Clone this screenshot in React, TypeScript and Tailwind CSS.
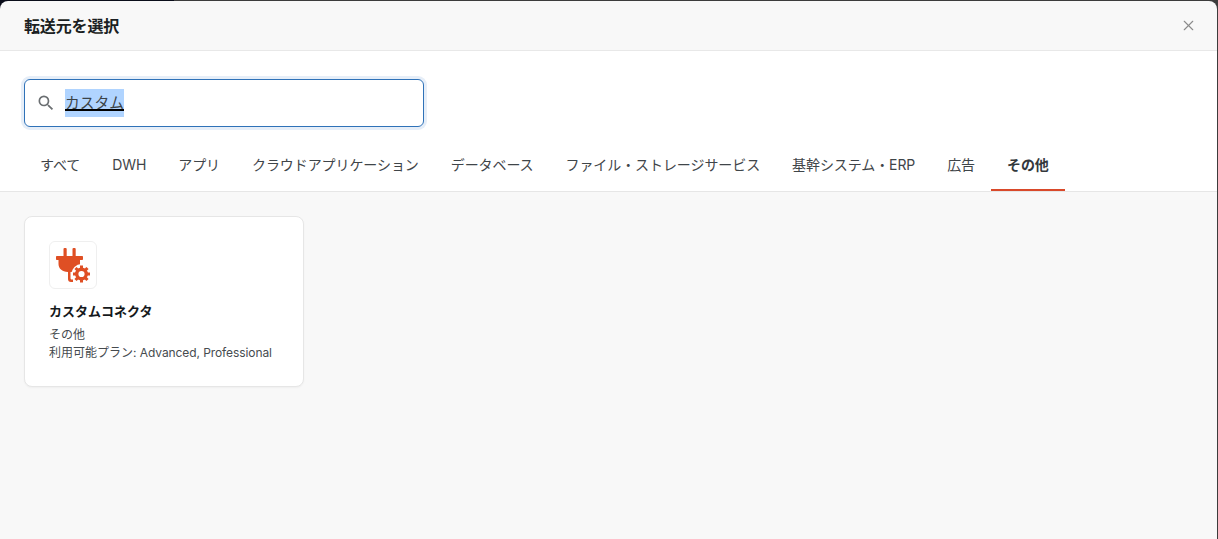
import { X } from 'lucide-react';
import { MdSearch } from 'react-icons/md';

const tabs = [
  'すべて',
  'DWH',
  'アプリ',
  'クラウドアプリケーション',
  'データベース',
  'ファイル・ストレージサービス',
  '基幹システム・ERP',
  '広告',
  'その他',
];

function PlugGearIcon() {
  return (
    <svg width="46" height="46" viewBox="1 1 46 46" fill="#df4f24">
      <rect x="14.500" y="7" width="3.200" height="9" rx="1" />
      <rect x="23.500" y="7" width="3.200" height="9" rx="1" />
      <path d="M8 15h25c.6 0 1 .4 1 1v2c0 .6-.4 1-1 1h-2v4c0 4.500-4 7.500-9.500 8V37c0 1 .5 1.500 1.500 1.500h1V41h-2c-2 0-3-1.200-3-3V31C13 30.500 9.500 27.500 9.500 23v-4H8c-.6 0-1-.4-1-1v-2c0-.6.4-1 1-1z" />
      <circle cx="32.500" cy="33" r="10" fill="#ffffff" />
      <g transform="translate(32.500 33)">
        <circle r="4.800" fill="none" stroke="#df4f24" strokeWidth="3.400" />
        {[0, 45, 90, 135, 180, 225, 270, 315].map((deg) => (
          <rect key={deg} x="-1.500" y="-8.500" width="3" height="3" transform={`rotate(${deg})`} />
        ))}
      </g>
    </svg>
  );
}

export default function App() {
  return (
    <div className="h-[539px] w-[1218px] overflow-hidden bg-[linear-gradient(90deg,#0a0d1a_174px,#3c3c3c_174px)] pt-px pr-px font-['Inter','Noto_Sans_CJK_JP',sans-serif]">
      <div className="flex h-full flex-col overflow-hidden rounded-t-lg bg-[#f8f8f8]">
        <header className="flex h-[50px] shrink-0 items-center justify-between border-b border-[#e8e8e8] pr-[20.500px] pl-6">
          <h1 className="pt-px text-[16px] font-bold tracking-[-0.15px] text-[#1b1f22]">転送元を選択</h1>
          <X className="h-[17px] w-[17px] text-[#8b8b8b]" strokeWidth={1.6} />
        </header>

        <div className="shrink-0 border-b border-[#e6e6e6] bg-white">
          <div className="px-6 pt-[28px]">
            <div className="flex h-[48px] w-[400px] items-center rounded-md border border-[#2f72b8] bg-white pl-[11px] shadow-[0_0_0_3px_#e6eef8]">
              <MdSearch className="h-[20px] w-[20px] text-[#6b6f72]" />
              <span className="ml-[9px] bg-[#b0d4ff] py-[3.500px] text-[14.750px] leading-[21px] text-[#3b4348] underline decoration-black decoration-2 underline-offset-1">
                カスタム
              </span>
            </div>
          </div>
          <nav className="mt-[16px] flex pl-6 text-[14px] tracking-[-0.085px] text-[#3f4549]">
            {tabs.map((tab) => (
              <div
                key={tab}
                className={
                  tab === 'その他'
                    ? 'flex h-[48px] items-center border-b-2 border-[#d9492a] px-4 pb-[3px] font-bold text-[#33383c]'
                    : 'flex h-[48px] items-center px-4 pb-[5px]'
                }
              >
                {tab}
              </div>
            ))}
          </nav>
        </div>

        <main className="flex-1 px-6 pt-6">
          <div className="h-[171px] w-[280px] rounded-lg border border-[#e6e6e6] bg-white p-6 shadow-[0_1px_2px_rgba(0,0,0,0.04)]">
            <div className="flex h-[48px] w-[48px] items-center justify-center rounded-md border border-[#efefef]">
              <PlugGearIcon />
            </div>
            <div className="mt-[12px] text-[13px] leading-[20px] font-bold text-[#15191c]">カスタムコネクタ</div>
            <div className="mt-[5px] text-[12px] leading-[18px] text-[#464b4f]">
              <div>その他</div>
              <div>
                利用可能プラン: <span className="tracking-[-0.09px]">Advanced, Professional</span>
              </div>
            </div>
          </div>
        </main>
      </div>
    </div>
  );
}
